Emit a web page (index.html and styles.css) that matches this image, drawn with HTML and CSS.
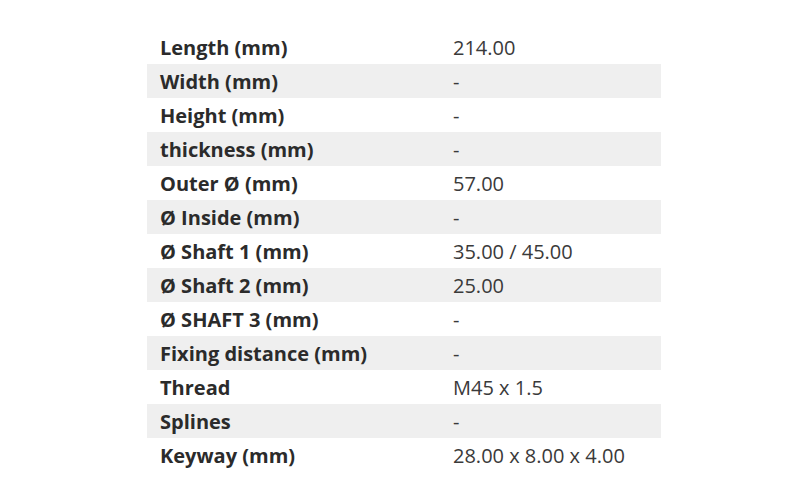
FILE: index.html
```html
<!DOCTYPE html>
<html>
<head>
<meta charset="utf-8">
<link rel="stylesheet" href="styles.css">
</head>
<body>
<div class="page">
  <div class="specs">
    <div class="row"><div class="label">Length (mm)</div><div class="value">214.00</div></div>
    <div class="row"><div class="label">Width (mm)</div><div class="value">-</div></div>
    <div class="row"><div class="label">Height (mm)</div><div class="value">-</div></div>
    <div class="row"><div class="label">thickness (mm)</div><div class="value">-</div></div>
    <div class="row"><div class="label">Outer Ø (mm)</div><div class="value">57.00</div></div>
    <div class="row"><div class="label">Ø Inside (mm)</div><div class="value">-</div></div>
    <div class="row"><div class="label">Ø Shaft 1 (mm)</div><div class="value">35.00 / 45.00</div></div>
    <div class="row"><div class="label">Ø Shaft 2 (mm)</div><div class="value">25.00</div></div>
    <div class="row"><div class="label">Ø SHAFT 3 (mm)</div><div class="value">-</div></div>
    <div class="row"><div class="label">Fixing distance (mm)</div><div class="value">-</div></div>
    <div class="row"><div class="label">Thread</div><div class="value">M45 x 1.5</div></div>
    <div class="row"><div class="label">Splines</div><div class="value">-</div></div>
    <div class="row"><div class="label">Keyway (mm)</div><div class="value">28.00 x 8.00 x 4.00</div></div>
  </div>
</div>
</body>
</html>
```
FILE: styles.css
```css
html, body {
  margin: 0;
  padding: 0;
  background: #ffffff;
}
.page {
  width: 800px;
  height: 500px;
  padding: 30px 0 0 147px;
  box-sizing: border-box;
  font-family: "Open Sans", "Liberation Sans", sans-serif;
  font-size: 20px;
  color: #333333;
}
.specs {
  width: 514px;
}
.row {
  display: grid;
  grid-template-columns: 292px 1fr;
  height: 34px;
  align-items: center;
}
.row:nth-child(even) {
  background: #efefef;
}
.label {
  padding-left: 13px;
  font-weight: 700;
  color: #2b2b2b;
}
.value {
  padding-left: 14px;
  font-weight: 400;
  color: #3a3a3a;
}
```
